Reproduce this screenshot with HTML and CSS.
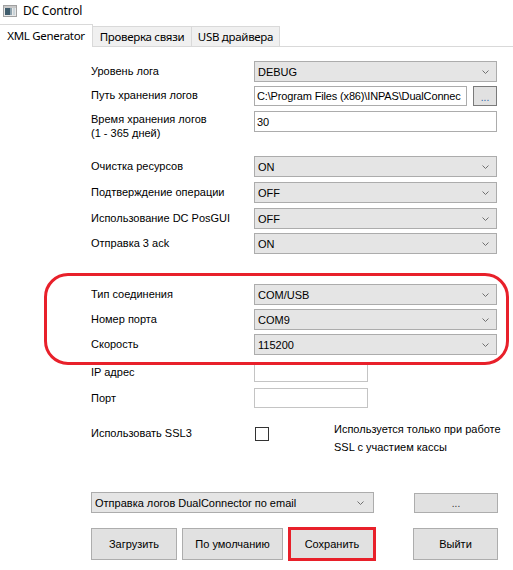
FILE: index.html
```html
<!DOCTYPE html>
<html lang="ru">
<head>
<meta charset="utf-8">
<title>DC Control</title>
<link rel="stylesheet" href="styles.css">
</head>
<body>
<div class="window">
  <div class="titlebar">
    <svg class="app-icon" width="14" height="12" viewBox="0 0 14 12">
      <rect x="0.5" y="0.5" width="13" height="11" fill="#e8e8e8" stroke="#a0a0a0"/>
      <rect x="1" y="1" width="12" height="2" fill="#c8c8c8"/>
      <rect x="2" y="3" width="5" height="7" fill="#3f5c6c"/>
      <rect x="7" y="3" width="2" height="7" fill="#8fa3ae"/>
      <rect x="10" y="3" width="2" height="7" fill="#c9d3d8"/>
    </svg>
    <span class="title">DC Control</span>
  </div>

  <div class="tabs">
    <div class="tab tab-active">XML Generator</div>
    <div class="tab tab-check">Проверка связи</div>
    <div class="tab tab-usb">USB драйвера</div>
  </div>

  <div class="panel">
    <div class="row r1">
      <span class="label">Уровень лога</span>
      <div class="combo"><span>DEBUG</span><svg class="chev" width="7" height="4" viewBox="0 0 7 4"><path d="M0.5 0.5 L3.5 3.5 L6.5 0.5" fill="none" stroke="#707070"/></svg></div>
    </div>
    <div class="row r2">
      <span class="label">Путь хранения логов</span>
      <div class="path-field">
        <div class="textbox path-box"><span class="path-text">C:\Program Files (x86)\INPAS\DualConnec</span></div>
        <div class="btn btn-browse">...</div>
      </div>
    </div>
    <div class="row row-top r3">
      <span class="label label-2l">Время хранения логов<br>(1 - 365 дней)</span>
      <div class="textbox">30</div>
    </div>

    <div class="row r4">
      <span class="label">Очистка ресурсов</span>
      <div class="combo"><span>ON</span><svg class="chev" width="7" height="4" viewBox="0 0 7 4"><path d="M0.5 0.5 L3.5 3.5 L6.5 0.5" fill="none" stroke="#707070"/></svg></div>
    </div>
    <div class="row r5">
      <span class="label">Подтверждение операции</span>
      <div class="combo"><span>OFF</span><svg class="chev" width="7" height="4" viewBox="0 0 7 4"><path d="M0.5 0.5 L3.5 3.5 L6.5 0.5" fill="none" stroke="#707070"/></svg></div>
    </div>
    <div class="row r6">
      <span class="label">Использование DC PosGUI</span>
      <div class="combo"><span>OFF</span><svg class="chev" width="7" height="4" viewBox="0 0 7 4"><path d="M0.5 0.5 L3.5 3.5 L6.5 0.5" fill="none" stroke="#707070"/></svg></div>
    </div>
    <div class="row r7">
      <span class="label">Отправка 3 ack</span>
      <div class="combo"><span>ON</span><svg class="chev" width="7" height="4" viewBox="0 0 7 4"><path d="M0.5 0.5 L3.5 3.5 L6.5 0.5" fill="none" stroke="#707070"/></svg></div>
    </div>

    <div class="row r8">
      <span class="label">Тип соединения</span>
      <div class="combo"><span>COM/USB</span><svg class="chev" width="7" height="4" viewBox="0 0 7 4"><path d="M0.5 0.5 L3.5 3.5 L6.5 0.5" fill="none" stroke="#707070"/></svg></div>
    </div>
    <div class="row r9">
      <span class="label">Номер порта</span>
      <div class="combo"><span>COM9</span><svg class="chev" width="7" height="4" viewBox="0 0 7 4"><path d="M0.5 0.5 L3.5 3.5 L6.5 0.5" fill="none" stroke="#707070"/></svg></div>
    </div>
    <div class="row r10">
      <span class="label">Скорость</span>
      <div class="combo"><span>115200</span><svg class="chev" width="7" height="4" viewBox="0 0 7 4"><path d="M0.5 0.5 L3.5 3.5 L6.5 0.5" fill="none" stroke="#707070"/></svg></div>
    </div>

    <div class="row row-small r11">
      <span class="label">IP адрес</span>
      <div class="textbox textbox-short"></div>
    </div>
    <div class="row row-small r12">
      <span class="label">Порт</span>
      <div class="textbox textbox-short"></div>
    </div>

    <div class="ssl-row">
      <span class="label ssl-label">Использовать SSL3</span>
      <span class="checkbox"></span>
      <span class="note">Используется только при работе<br>SSL с участием кассы</span>
    </div>

    <div class="email-row">
      <div class="combo combo-email"><span>Отправка логов DualConnector по email</span><svg class="chev" width="7" height="4" viewBox="0 0 7 4"><path d="M0.5 0.5 L3.5 3.5 L6.5 0.5" fill="none" stroke="#707070"/></svg></div>
      <div class="btn btn-dots">...</div>
    </div>

    <div class="buttons">
      <div class="btn btn-big btn-load">Загрузить</div>
      <div class="btn btn-big btn-default">По умолчанию</div>
      <div class="btn btn-big btn-save">Сохранить</div>
      <div class="btn btn-big btn-exit">Выйти</div>
    </div>

    <div class="highlight"></div>
  </div>
</div>
</body>
</html>
```

FILE: styles.css
```css
* { box-sizing: border-box; }

html, body {
  margin: 0;
  padding: 0;
  background: #ffffff;
}

body {
  font-family: "Liberation Sans", Arial, sans-serif;
  font-size: 11px;
  color: #000;
}

.window {
  width: 513px;
  height: 570px;
  overflow: hidden;
  position: relative;
}

.titlebar {
  height: 22px;
  display: flex;
  align-items: center;
  padding-left: 3px;
  gap: 6px;
  font-family: "Noto Sans", "Open Sans", sans-serif;
  font-size: 12px;
}

.app-icon { display: block; }

.title { line-height: 16px; letter-spacing: -0.2px; }

.tabs {
  margin-top: 2px;
  height: 23px;
  display: flex;
  align-items: flex-end;
  border-bottom: 1px solid #d9d9d9;
  font-family: "Noto Sans", "Open Sans", sans-serif;
  font-size: 11.5px;
  letter-spacing: -0.3px;
}

.tab {
  height: 20px;
  background: #f0f0f0;
  border: 1px solid #d9d9d9;
  border-bottom: none;
  border-left: none;
  display: flex;
  align-items: center;
  justify-content: center;
  line-height: 16px;
  white-space: nowrap;
}

.tab-active {
  height: 23px;
  width: 94px;
  padding-bottom: 1px;
  background: #fff;
  border-left: 1px solid #d9d9d9;
  margin-bottom: -1px;
  margin-left: -1px;
}

.tab-check { width: 99px; }
.tab-usb { width: 88px; }

.panel {
  position: relative;
  display: flow-root;
  padding-left: 91px;
}

.row {
  display: grid;
  grid-template-columns: 163px 243px;
  align-items: center;
  height: 21px;
}

.row-top { align-items: start; height: auto; }
.row-small { height: 20px; }
.row-small .textbox { height: 20px; }

.label { white-space: nowrap; line-height: 13px; }
.label-2l { line-height: 14px; padding-top: 1px; }

.r1 { margin-top: 14px; }
.r2 { margin-top: 3px; }
.r3 { margin-top: 5px; }
.r4 { margin-top: 16px; }
.r5 { margin-top: 5px; }
.r6 { margin-top: 5px; }
.r7 { margin-top: 4px; }
.r8 { margin-top: 30px; }
.r9 { margin-top: 4px; }
.r10 { margin-top: 4px; }
.r11 { margin-top: 7px; }
.r12 { margin-top: 6px; }

.combo {
  height: 21px;
  border: 1px solid #acacac;
  background: #e5e5e5;
  display: flex;
  align-items: center;
  justify-content: space-between;
  padding: 0 7px 0 3px;
  white-space: nowrap;
  overflow: hidden;
}

.chev { flex: none; display: block; }

.textbox {
  height: 21px;
  border: 1px solid #acacac;
  background: #fff;
  padding: 0 2px;
  display: flex;
  align-items: center;
  white-space: nowrap;
  overflow: hidden;
}

.textbox-short { width: 114px; border-color: #c4c4c4; }

.path-field {
  display: flex;
  align-items: center;
  gap: 6px;
}

.path-box { width: 213px; height: 20px; padding-right: 0; }
.path-text { letter-spacing: -0.15px; }

.btn {
  background: #e1e1e1;
  border: 1px solid #adadad;
  display: flex;
  align-items: center;
  justify-content: center;
  white-space: nowrap;
}

.btn-browse {
  width: 24px;
  height: 20px;
  border-color: #7a7a7a;
  color: #2b5fa8;
  padding-top: 3px;
  font-size: 10px;
}

.ssl-row {
  margin-top: 12px;
  display: grid;
  grid-template-columns: 163px 80px auto;
  align-items: start;
}

.ssl-label { margin-top: 7px; }

.checkbox {
  width: 14px;
  height: 14px;
  margin-top: 7px;
  border: 1px solid #333;
  background: #fff;
  margin-left: 1px;
}

.note {
  line-height: 18px;
  white-space: nowrap;
}

.email-row {
  margin-top: 36px;
  display: flex;
  align-items: center;
  gap: 40px;
}

.combo-email { width: 283px; padding-right: 9px; }

.btn-dots {
  width: 84px;
  height: 20px;
  font-size: 10px;
  padding-top: 2px;
  color: #333;
}

.buttons {
  margin-top: 14px;
  display: flex;
  align-items: center;
}

.btn-big { height: 32px; font-size: 11px; }
.btn-load { width: 86px; }
.btn-default { width: 101px; margin-left: 5px; }
.btn-save {
  width: 88px;
  height: 34px;
  margin-left: 5px;
  border: 3px solid #e8202a;
}
.btn-exit { width: 85px; margin-left: 37px; }

.highlight {
  position: absolute;
  left: 44px;
  top: 226px;
  width: 465px;
  height: 92px;
  border: 3px solid #e8202a;
  border-radius: 24px;
  pointer-events: none;
}
```
